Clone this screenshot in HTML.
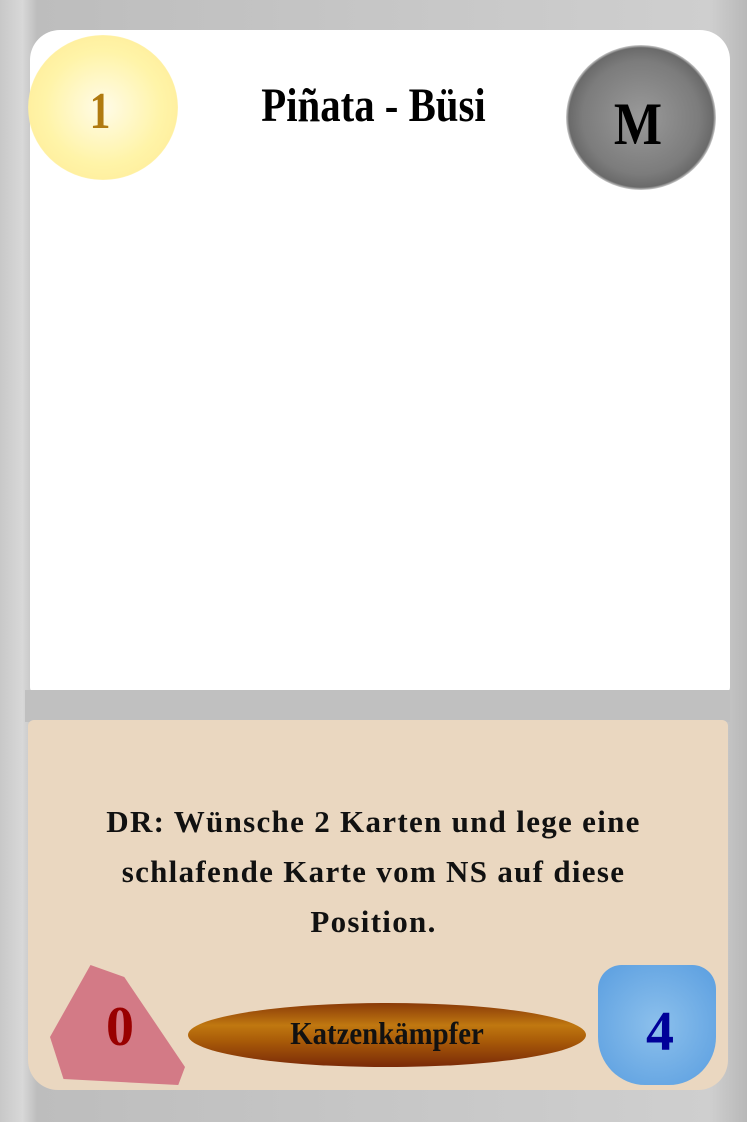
<!DOCTYPE html>
<html><head><style>
body{margin:0;width:747px;height:1122px;overflow:hidden;background:#c4c4c4;position:relative;font-family:"Liberation Serif",serif;}
.abs{position:absolute;}
</style></head><body>
<div class="abs" style="left:0;top:0;width:747px;height:1122px;background:linear-gradient(90deg,#c8c8c8,#d8d8d8 3%,#bdbdbd 5%,#cfcfcf 95%,#b8b8b8);"></div>
<div class="abs" style="left:30px;top:30px;width:700px;height:665px;background:#fff;border-radius:30px 30px 8px 8px;"></div>
<div class="abs" style="left:25px;top:690px;width:705px;height:32px;background:#c0c0c0;"></div>
<div class="abs" style="left:28px;top:720px;width:700px;height:370px;background:#ead7c0;border-radius:6px 6px 30px 30px;"></div>
<div class="abs" style="left:28px;top:35px;width:150px;height:145px;border-radius:50%;background:radial-gradient(#fffbe8,#fff4a8 55%,#fff0a0 70%,rgba(255,240,150,0) 72%);"></div>
<div class="abs" style="left:566px;top:45px;width:150px;height:145px;border-radius:50%;background:radial-gradient(#9a9a9a,#7c7c7c 55%,#6a6a6a 68%,rgba(100,100,100,0) 72%);"></div>
<div class="abs" style="left:60px;top:82px;width:80px;text-align:center;font-size:52px;font-weight:bold;color:#b07a10;transform:scaleX(.8);">1</div>
<div class="abs" style="left:598px;top:90px;width:80px;text-align:center;font-size:60px;font-weight:bold;color:#000;transform:scaleX(.85);">M</div>
<div class="abs" style="left:150px;top:78px;width:447px;text-align:center;font-size:48px;font-weight:bold;color:#000;transform:scaleX(.85);">Piñata - Büsi</div>
<div class="abs" style="left:90px;top:797px;width:567px;text-align:center;font-size:31px;font-weight:bold;line-height:50px;color:#111;letter-spacing:1.3px;">DR: Wünsche 2 Karten und lege eine schlafende Karte vom NS auf diese Position.</div>
<div class="abs" style="left:50px;top:965px;width:135px;height:120px;background:#d07080;clip-path:polygon(30% 0,55% 10%,100% 85%,95% 100%,10% 95%,0 60%);opacity:.9;"></div>
<div class="abs" style="left:80px;top:995px;width:80px;text-align:center;font-size:56px;font-weight:bold;color:#990000;">0</div>
<div class="abs" style="left:598px;top:965px;width:118px;height:120px;background:radial-gradient(#8cc0ec,#5a9ee0);border-radius:20% 20% 40% 40%;"></div>
<div class="abs" style="left:620px;top:1000px;width:80px;text-align:center;font-size:56px;font-weight:bold;color:#000099;">4</div>
<div class="abs" style="left:188px;top:1003px;width:398px;height:64px;border-radius:50%;background:linear-gradient(180deg,#8a3a08,#c07810 35%,#a85a08 60%,#7a2a08);"></div>
<div class="abs" style="left:188px;top:1015px;width:398px;text-align:center;font-size:32px;font-weight:bold;color:#111;transform:scaleX(.9);">Katzenkämpfer</div>
</body></html>
